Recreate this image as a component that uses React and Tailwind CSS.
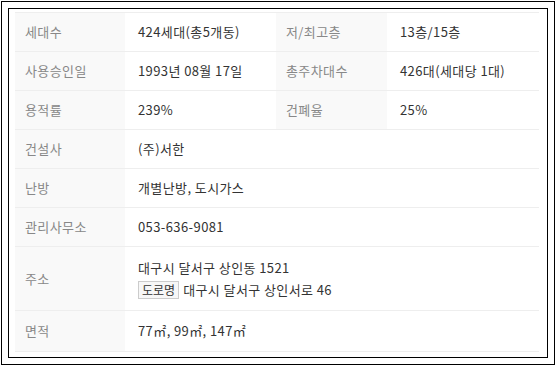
export default function App() {
  const Label = ({ children, h = "h-[39px]" }) => (
    <div className={`${h} bg-[#f9f9f9] border-b border-[#eeeeee] flex items-center pl-[10px] text-[#888888]`}>{children}</div>
  );
  const Val = ({ children, h = "h-[39px]", span = "" }) => (
    <div className={`${h} ${span} bg-white border-b border-[#eeeeee] flex items-center pl-[13px] text-[#333333]`}>{children}</div>
  );
  return (
    <div className="w-[556px] h-[366px] bg-white p-px" style={{ fontFamily: '"Noto Sans CJK KR", "Noto Sans", sans-serif' }}>
      <div className="h-full border border-black p-[6px]">
        <div className="h-full border border-black pl-[6px] pr-[5px] pt-[3px]">
          <div className="w-[524px] grid grid-cols-[110px_151px_111px_152px] border-t border-[#eeeeee] text-[13px] leading-[20px] tracking-[0.4px]">
            <Label>세대수</Label>
            <Val>424세대(총5개동)</Val>
            <Label>저/최고층</Label>
            <Val>13층/15층</Val>
            <Label>사용승인일</Label>
            <Val>1993년 08월 17일</Val>
            <Label>총주차대수</Label>
            <Val>426대(세대당 1대)</Val>
            <Label>용적률</Label>
            <Val>239%</Val>
            <Label>건폐율</Label>
            <Val>25%</Val>
            <Label>건설사</Label>
            <Val span="col-span-3">(주)서한</Val>
            <Label>난방</Label>
            <Val span="col-span-3">개별난방, 도시가스</Val>
            <Label>관리사무소</Label>
            <Val span="col-span-3">053-636-9081</Val>
            <Label h="h-[64px]">주소</Label>
            <div className="h-[64px] col-span-3 bg-white border-b border-[#eeeeee] flex flex-col justify-center pl-[13px] text-[#333333]">
              <div className="leading-[22px]">대구시 달서구 상인동 1521</div>
              <div className="flex items-center leading-[22px]">
                <span className="inline-flex items-center h-[18px] px-[3px] mr-[4px] border border-[#cccccc] bg-[#f7f7f7] text-[12px] leading-[16px] tracking-normal text-[#333333]">도로명</span>
                대구시 달서구 상인서로 46
              </div>
            </div>
            <Label h="h-[41px]">면적</Label>
            <Val h="h-[41px]" span="col-span-3">77㎡, 99㎡, 147㎡</Val>
          </div>
        </div>
      </div>
    </div>
  );
}
